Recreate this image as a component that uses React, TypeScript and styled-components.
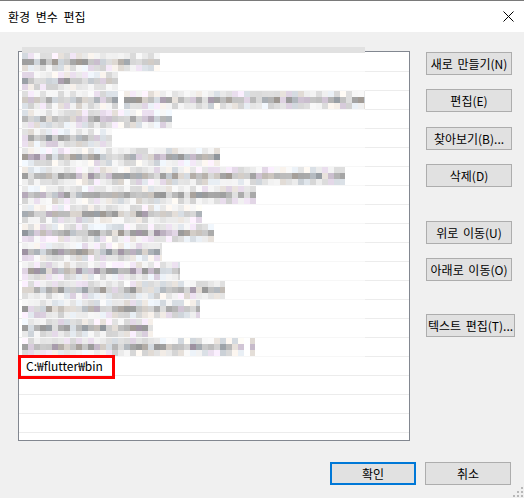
import React, { useMemo } from "react";
import styled, { createGlobalStyle } from "styled-components";

const Global = createGlobalStyle`
  html, body { margin: 0; padding: 0; background: #f0f0f0; }
  body {
    font-family: "Noto Sans CJK KR", "Noto Sans", sans-serif;
    font-size: 12px;
    color: #000;
  }
`;

const Window = styled.div`
  width: 524px;
  height: 498px;
  display: flex;
  flex-direction: column;
  background: #f0f0f0;
  position: relative;
  overflow: hidden;
`;

const TitleBar = styled.div`
  height: 32px;
  box-sizing: border-box;
  border-top: 1px solid #7a7a7a;
  background: #fff;
  display: flex;
  align-items: center;
  justify-content: space-between;
  padding: 0 10px 0 8px;
`;

const Title = styled.span`
  font-size: 12px;
  line-height: 16px;
  word-spacing: 3px;
`;

const Body = styled.div`
  flex: 1;
  display: flex;
  flex-direction: column;
  padding: 19px 13px 0 18px;
`;

const Main = styled.div`
  display: flex;
  gap: 16px;
`;

const ListWrap = styled.div`
  position: relative;
  width: 392px;
  height: 390px;
  flex: none;
`;

const ListBox = styled.div`
  width: 100%;
  height: 100%;
  box-sizing: border-box;
  border: 1px solid #828790;
  background: #fff;
  overflow: hidden;
  padding-top: 1px;
`;

const Row = styled.div`
  height: 19px;
  box-sizing: border-box;
  border-bottom: 1px solid #ececec;
  padding-left: 7px;
  display: flex;
  align-items: center;
  white-space: nowrap;
  font-size: 12px;
  line-height: 14px;
`;

const Redaction = styled.div`
  position: absolute;
  left: 4px;
  top: -4px;
  width: 343px;
  height: 310px;
  background: #fff;
  display: flex;
  flex-direction: column;
`;

const RedactBand = styled.div`
  height: 6px;
  background: #e1e1e1;
`;

const RedactRow = styled.div`
  height: 19px;
  box-sizing: border-box;
  border-bottom: 1px solid #f7f7f7;
  display: flex;
  align-items: flex-start;
`;

const Highlight = styled.div`
  position: absolute;
  left: 0;
  top: 304px;
  width: 97px;
  height: 24px;
  box-sizing: border-box;
  border: 3px solid #ff0000;
  pointer-events: none;
`;

const ButtonColumn = styled.div`
  display: flex;
  flex-direction: column;
  padding-top: 1px;
`;

const Button = styled.button<{ $top?: number; $w?: number; $primary?: boolean }>`
  margin-top: ${(p) => p.$top ?? 0}px;
  width: ${(p) => p.$w ?? 86}px;
  height: 23px;
  box-sizing: border-box;
  padding: 0;
  background: #e1e1e1;
  border: ${(p) => (p.$primary ? "2px solid #0078d7" : "1px solid #adadad")};
  font-family: "Noto Sans CJK KR", "Noto Sans", sans-serif;
  font-size: 12px;
  line-height: 14px;
  word-spacing: 2px;
  color: #000;
  white-space: nowrap;
  display: flex;
  align-items: center;
  justify-content: center;
  overflow: visible;
`;

const Footer = styled.div`
  margin-top: 21px;
  display: flex;
  justify-content: flex-end;
  gap: 9px;
`;

const Grip = styled.svg`
  position: absolute;
  right: 1px;
  bottom: 1px;
`;

function makeRng(seed: number) {
  let s = seed % 2147483647;
  if (s <= 0) s += 2147483646;
  return () => {
    s = (s * 16807) % 2147483647;
    return (s - 1) / 2147483646;
  };
}

const bands = [
  { y: 0, h: 6, min: 215, max: 252 },
  { y: 6, h: 6, min: 150, max: 225 },
  { y: 12, h: 6, min: 208, max: 250 },
];

function Mosaic({ width, seed, gaps = [] }: { width: number; seed: number; gaps?: [number, number][] }) {
  const rects = useMemo(() => {
    const r = makeRng(seed * 7919 + 13);
    const out: React.ReactNode[] = [];
    bands.forEach((b, bi) => {
      for (let x = 0; x < width; x += 6) {
        if (gaps.some(([a, z]) => x >= a && x < z)) continue;
        const w = Math.min(6, width - x);
        const v = b.min + r() * (b.max - b.min);
        const t = r();
        let dr = 0, dg = 0, db = 0;
        if (t < 0.15) { dr = 6; dg = -6; db = 10; }
        else if (t < 0.3) { dr = 8; dg = 2; db = -4; }
        else if (t < 0.45) { dr = -6; dg = 0; db = 6; }
        const c = (n: number) => Math.max(0, Math.min(255, Math.round(n)));
        out.push(
          <rect key={`${bi}-${x}`} x={x} y={b.y} width={w} height={b.h}
            fill={`rgb(${c(v + dr)},${c(v + dg)},${c(v + db)})`} />
        );
      }
    });
    return out;
  }, [width, seed]);
  return (
    <svg width={width} height={18} style={{ display: "block" }}>
      {rects}
    </svg>
  );
}

const redactedRows: { end: number; gaps?: [number, number][] }[] = [
  { end: 160 },
  { end: 118 },
  { end: 365, gaps: [[96, 102]] },
  { end: 172 },
  { end: 112 },
  { end: 220 },
  { end: 345 },
  { end: 256 },
  { end: 202 },
  { end: 214 },
  { end: 162 },
  { end: 180 },
  { end: 225 },
  { end: 200 },
  { end: 153 },
  { end: 255, gaps: [[222, 228]] },
];

const TOTAL_ROWS = 21;

export default function App() {
  return (
    <>
      <Global />
      <Window>
        <TitleBar>
          <Title>환경 변수 편집</Title>
          <svg width="11" height="11" viewBox="0 0 11 11">
            <path d="M0.5 0.5 L10.5 10.5 M10.5 0.5 L0.5 10.5" stroke="#000" strokeWidth="1" fill="none" />
          </svg>
        </TitleBar>
        <Body>
          <Main>
            <ListWrap>
              <ListBox>
                {Array.from({ length: TOTAL_ROWS }).map((_, i) => (
                  <Row key={i}>{i === 16 ? "C:₩flutter₩bin" : ""}</Row>
                ))}
              </ListBox>
              <Redaction>
                <RedactBand />
                {redactedRows.map((r, i) => (
                  <RedactRow key={i}>
                    <Mosaic width={r.end - 22} seed={i + 1} gaps={r.gaps} />
                  </RedactRow>
                ))}
              </Redaction>
              <Highlight />
            </ListWrap>
            <ButtonColumn>
              <Button>새로 만들기(N)</Button>
              <Button $top={14}>편집(E)</Button>
              <Button $top={15}>찾아보기(B)...</Button>
              <Button $top={14}>삭제(D)</Button>
              <Button $top={34}>위로 이동(U)</Button>
              <Button $top={14}>아래로 이동(O)</Button>
              <Button $top={33} $w={89}>텍스트 편집(T)...</Button>
            </ButtonColumn>
          </Main>
          <Footer>
            <Button $primary>확인</Button>
            <Button>취소</Button>
          </Footer>
        </Body>
        <Grip width="10" height="10" viewBox="0 0 10 10">
          <rect x="8" y="0" width="2" height="2" fill="#b8b8b8" />
          <rect x="4" y="4" width="2" height="2" fill="#b8b8b8" />
          <rect x="8" y="4" width="2" height="2" fill="#b8b8b8" />
          <rect x="0" y="8" width="2" height="2" fill="#b8b8b8" />
          <rect x="4" y="8" width="2" height="2" fill="#b8b8b8" />
          <rect x="8" y="8" width="2" height="2" fill="#b8b8b8" />
        </Grip>
      </Window>
    </>
  );
}
